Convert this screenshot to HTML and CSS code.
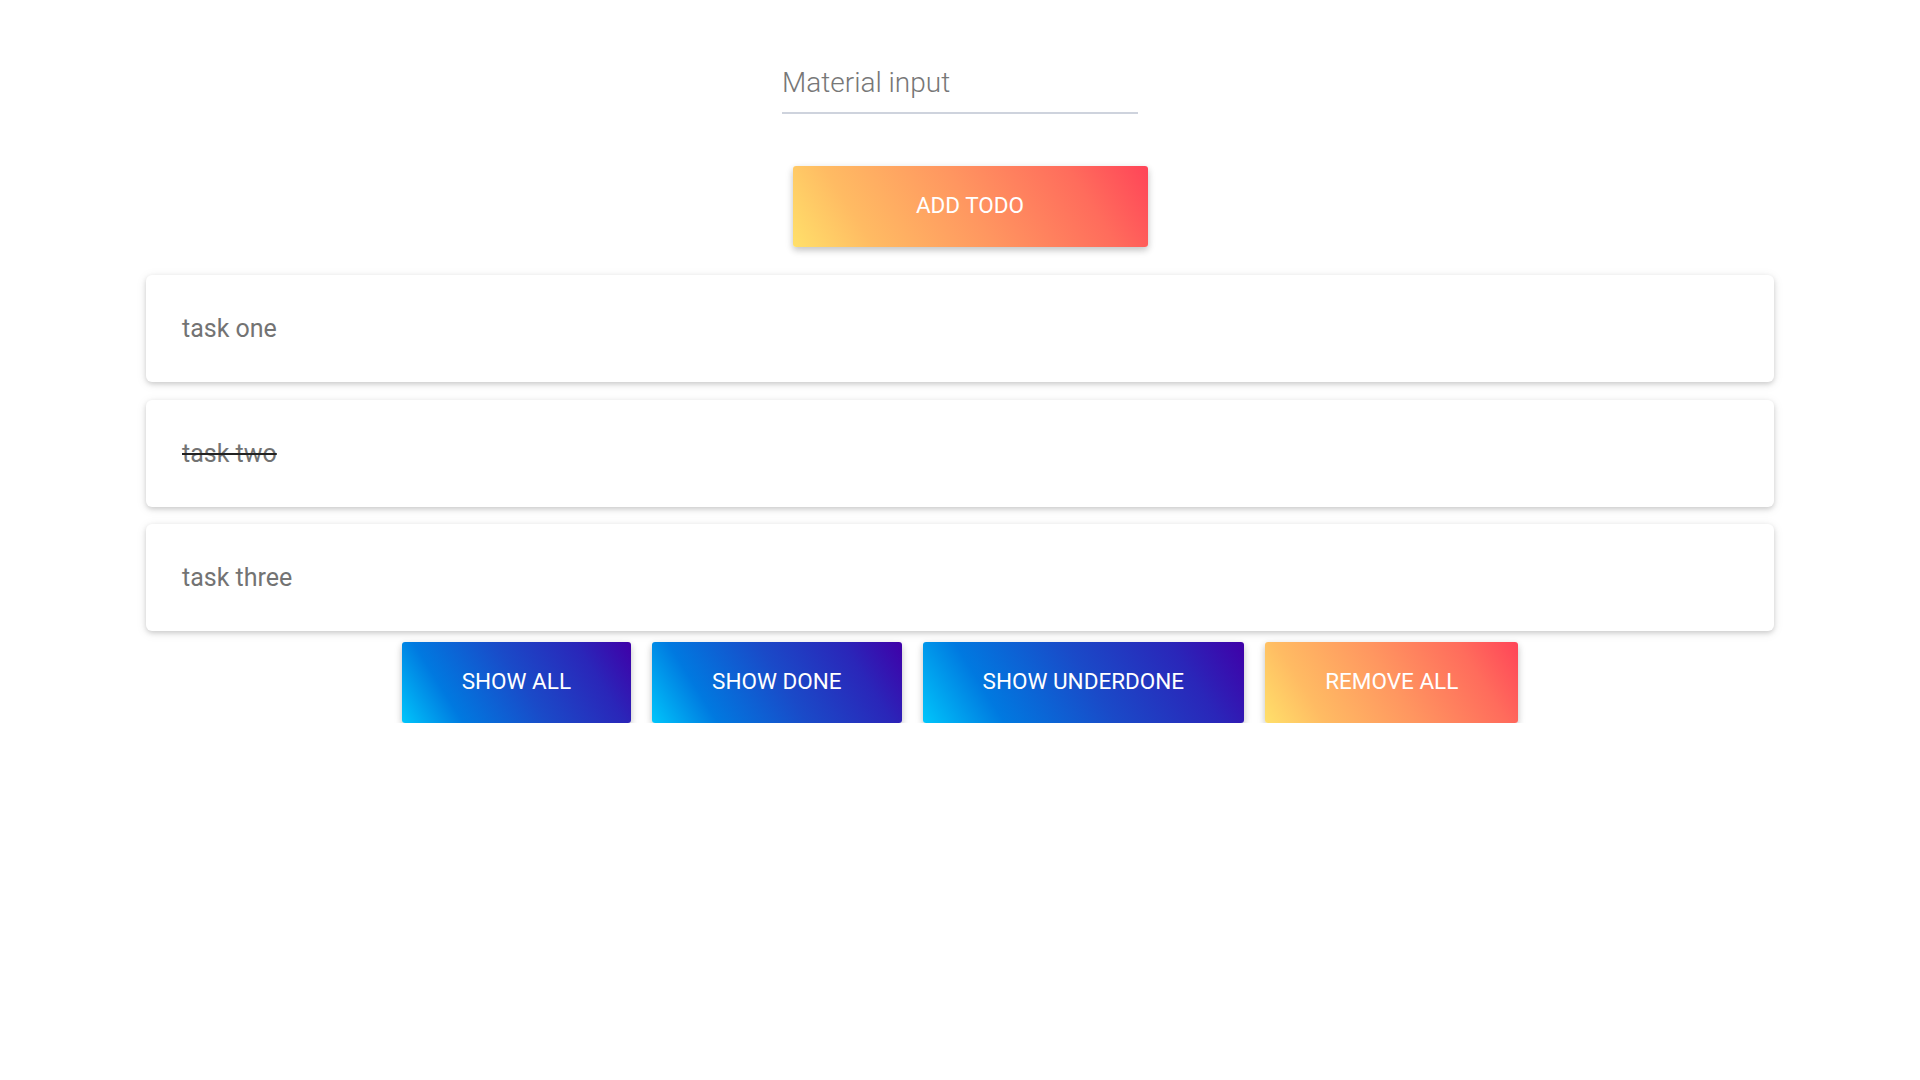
FILE: index.html
```html
<!DOCTYPE html>
<html lang="en">
<head>
<meta charset="utf-8">
<title>Todo</title>
<link rel="stylesheet" href="styles.css">
</head>
<body>
<main class="app">
  <div class="field">
    <input class="field-input" type="text" placeholder="Material input">
  </div>
  <div class="add-row">
    <button class="btn btn-warm btn-add">ADD TODO</button>
  </div>
  <ul class="todo-list">
    <li class="todo-card"><span class="todo-text">task one</span></li>
    <li class="todo-card"><span class="todo-text done">task two</span></li>
    <li class="todo-card"><span class="todo-text">task three</span></li>
  </ul>
  <div class="filters">
    <button class="btn btn-cool">SHOW ALL</button>
    <button class="btn btn-cool">SHOW DONE</button>
    <button class="btn btn-cool">SHOW UNDERDONE</button>
    <button class="btn btn-warm">REMOVE ALL</button>
  </div>
</main>
</body>
</html>
```

FILE: styles.css
```css
* { box-sizing: border-box; }
html, body { margin: 0; padding: 0; background: #ffffff; }
body { font-family: Roboto, "Noto Sans", Arial, sans-serif; }

.app {
  width: 1628px;
  margin: 0 auto;
  padding-top: 62px;
}

.field {
  width: 356px;
  margin: 0 auto;
}
.field-input {
  display: block;
  width: 100%;
  height: 52px;
  border: none;
  border-bottom: 2px solid #ced3dd;
  outline: none;
  padding: 0 0 10px;
  font-family: Roboto, sans-serif;
  font-weight: 300;
  font-size: 28px;
  color: #757575;
  background: transparent;
}
.field-input::placeholder { color: #777777; opacity: 1; }

.add-row {
  display: flex;
  justify-content: center;
  margin-top: 52px;
  padding-left: 20px;
}

.btn {
  height: 81px;
  border: none;
  border-radius: 3px;
  padding: 0 60px 3px;
  font-family: Roboto, sans-serif;
  font-size: 22.5px;
  font-weight: 400;
  color: #ffffff;
  box-shadow: 0 3px 6px rgba(0,0,0,0.16), 0 3px 10px rgba(0,0,0,0.10);
  cursor: pointer;
}
.btn-add { width: 355px; }
.btn-warm {
  background: linear-gradient(58deg, #ffe06a 0%, #ffbb63 20%, #ff9660 50%, #ff6c5c 80%, #ff4458 100%);
}
.btn-cool {
  background: linear-gradient(58deg, #00c6fb 0%, #0079e0 22%, #1a4ac8 52%, #2a26b9 80%, #4000a8 100%);
}

.todo-list {
  list-style: none;
  margin: 28px 0 0;
  padding: 0;
  display: flex;
  flex-direction: column;
  gap: 17.5px;
}
.todo-card {
  height: 107px;
  display: flex;
  align-items: center;
  padding: 0 36px;
  background: #ffffff;
  border-radius: 6px;
  box-shadow: 0 2px 5px rgba(0,0,0,0.16), 0 2px 12px rgba(0,0,0,0.08);
}
.todo-text {
  font-size: 25px;
  color: #737373;
}
.todo-text.done {
  text-decoration: line-through;
  text-decoration-color: #222222;
  text-decoration-thickness: 2px;
}

.filters {
  display: flex;
  justify-content: center;
  gap: 21px;
  margin-top: 11px;
}
```
